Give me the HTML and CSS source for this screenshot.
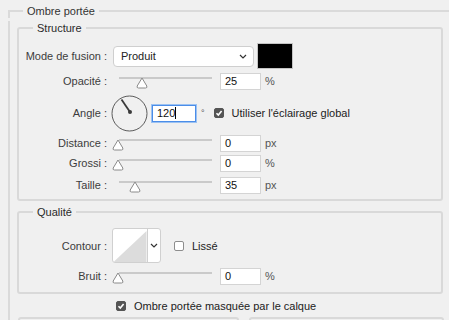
FILE: index.html
```html
<!DOCTYPE html>
<html lang="fr">
<head>
<meta charset="utf-8">
<title>Ombre portée</title>
<link rel="stylesheet" href="styles.css">
</head>
<body>
<div class="page">
  <div class="outer-head">
    <span class="seg seg-start"></span>
    <h2 class="outer-title">Ombre portée</h2>
    <span class="seg seg-end"></span>
  </div>
  <section class="outer">

    <fieldset class="box structure">
      <legend>Structure</legend>

      <div class="row row-mode">
        <span class="label">Mode de fusion :</span>
        <div class="select">
          <span>Produit</span>
          <svg class="chev" width="8" height="5" viewBox="0 0 8 5"><path d="M1 1 L4 4 L7 1" fill="none" stroke="#333" stroke-width="1.2"/></svg>
        </div>
        <div class="swatch"></div>
      </div>

      <div class="row">
        <span class="label">Opacité :</span>
        <div class="slider">
          <div class="track"></div>
          <svg class="thumb" style="left:24px" width="12" height="12" viewBox="0 0 12 12"><path d="M6 1 L10.8 9 Q11.5 11 9.5 11 H2.5 Q0.5 11 1.2 9 Z" fill="#fff" stroke="#8a8a8a"/></svg>
        </div>
        <div class="field">25</div><span class="unit">%</span>
      </div>

      <div class="row row-angle">
        <span class="label">Angle :</span>
        <svg class="dial" width="37" height="37" viewBox="0 0 37 37">
          <circle cx="18.5" cy="18.5" r="17.5" fill="none" stroke="#5a5a5a" stroke-width="1"/>
          <line x1="19" y1="17" x2="10.5" y2="4.5" stroke="#3a3a3a" stroke-width="1.8"/>
          <circle cx="19" cy="17" r="2" fill="#3a3a3a"/>
        </svg>
        <div class="field focus">120<span class="caret"></span></div>
        <span class="deg">°</span>
        <span class="check"><span class="cb on"><svg width="10" height="10" viewBox="0 0 10 10"><path d="M2.5 5.2 L4.3 7 L7.6 3" fill="none" stroke="#fff" stroke-width="1.6"/></svg></span>Utiliser l'éclairage global</span>
      </div>

      <div class="row row-tight">
        <span class="label">Distance :</span>
        <div class="slider">
          <div class="track"></div>
          <svg class="thumb" style="left:0px" width="12" height="12" viewBox="0 0 12 12"><path d="M6 1 L10.8 9 Q11.5 11 9.5 11 H2.5 Q0.5 11 1.2 9 Z" fill="#fff" stroke="#8a8a8a"/></svg>
        </div>
        <div class="field">0</div><span class="unit">px</span>
      </div>

      <div class="row row-tight">
        <span class="label">Grossi :</span>
        <div class="slider">
          <div class="track"></div>
          <svg class="thumb" style="left:0px" width="12" height="12" viewBox="0 0 12 12"><path d="M6 1 L10.8 9 Q11.5 11 9.5 11 H2.5 Q0.5 11 1.2 9 Z" fill="#fff" stroke="#8a8a8a"/></svg>
        </div>
        <div class="field">0</div><span class="unit">%</span>
      </div>

      <div class="row row-last">
        <span class="label">Taille :</span>
        <div class="slider">
          <div class="track"></div>
          <svg class="thumb" style="left:17px" width="12" height="12" viewBox="0 0 12 12"><path d="M6 1 L10.8 9 Q11.5 11 9.5 11 H2.5 Q0.5 11 1.2 9 Z" fill="#fff" stroke="#8a8a8a"/></svg>
        </div>
        <div class="field">35</div><span class="unit">px</span>
      </div>
    </fieldset>

    <fieldset class="box quality">
      <legend>Qualité</legend>

      <div class="row row-contour">
        <span class="label">Contour :</span>
        <div class="contour">
          <svg class="curve" width="35" height="35" viewBox="0 0 35 35"><path d="M0 35 L35 2 L35 35 Z" fill="#dcdcdc"/></svg>
          <div class="drop"><svg width="8" height="5" viewBox="0 0 8 5"><path d="M1 1 L4 4 L7 1" fill="none" stroke="#333" stroke-width="1.2"/></svg></div>
        </div>
        <span class="check lisse"><span class="cb"></span>Lissé</span>
      </div>

      <div class="row row-bruit">
        <span class="label">Bruit :</span>
        <div class="slider">
          <div class="track"></div>
          <svg class="thumb" style="left:0px" width="12" height="12" viewBox="0 0 12 12"><path d="M6 1 L10.8 9 Q11.5 11 9.5 11 H2.5 Q0.5 11 1.2 9 Z" fill="#fff" stroke="#8a8a8a"/></svg>
        </div>
        <div class="field">0</div><span class="unit">%</span>
      </div>
    </fieldset>

    <div class="mask-row">
      <span class="check"><span class="cb on"><svg width="10" height="10" viewBox="0 0 10 10"><path d="M2.5 5.2 L4.3 7 L7.6 3" fill="none" stroke="#fff" stroke-width="1.6"/></svg></span>Ombre portée masquée par le calque</span>
    </div>

    <div class="bottom">
      <div class="panel panel-left"></div>
      <div class="panel panel-right"></div>
    </div>
  </section>
</div>
</body>
</html>
```

FILE: styles.css
```css
html, body {
  margin: 0;
  padding: 0;
  background: #f0f0f0;
}
body {
  width: 449px;
  height: 320px;
  overflow: hidden;
  font-family: "Liberation Sans", Arial, sans-serif;
  font-size: 11px;
  color: #3c3c3c;
}
.page {
  padding: 4px 0 0 8px;
  height: 316px;
  overflow: hidden;
}
fieldset {
  margin: 0;
  min-width: 0;
}
legend {
  padding: 0 4px;
  line-height: 14px;
  color: #2a2a2a;
}
.outer-head {
  display: flex;
  height: 14px;
  width: 441px;
}
.seg {
  box-sizing: border-box;
  height: 8px;
  align-self: flex-end;
  border-top: 2px solid #dadada;
}
.seg-start {
  width: 15px;
  flex: none;
  border-left: 2px solid #dadada;
}
.seg-end {
  flex: 1;
}
.outer-title {
  margin: 0;
  padding: 0 4px;
  font-size: 11px;
  font-weight: normal;
  line-height: 14px;
  color: #333;
  white-space: nowrap;
}
.outer {
  box-sizing: border-box;
  width: 441px;
  border-left: 2px solid #dadada;
  padding: 0 0 0 7px;
}
.box {
  box-sizing: border-box;
  width: 426px;
  border: 2px solid #d9d9d9;
  border-radius: 3px;
  padding: 0;
}
.box > legend {
  margin-left: 14px;
}
.structure {
  margin-top: 3px;
  padding-bottom: 5px;
}
.quality {
  margin-top: 4px;
  padding-bottom: 7px;
}

.row {
  display: flex;
  align-items: center;
  height: 18px;
  margin-top: 3px;
}
.label {
  width: 88px;
  flex: none;
  text-align: right;
  white-space: pre;
}
.row-mode {
  height: 26px;
  margin-top: 8px;
}
.row-angle {
  height: 38px;
  margin-top: 4px;
}
.row-tight {
  margin-top: 2px;
}
.row-last {
  margin-top: 4px;
}

.select {
  box-sizing: border-box;
  margin-left: 6px;
  width: 141px;
  height: 21px;
  background: #fff;
  border: 1px solid #cfcfcf;
  border-radius: 4px;
  display: flex;
  align-items: center;
  justify-content: space-between;
  padding: 0 6px 0 7px;
  color: #222;
}
.chev {
  display: block;
}
.swatch {
  box-sizing: border-box;
  margin-left: 3px;
  width: 36px;
  height: 26px;
  background: #000;
  border: 1px solid #c4c4c4;
}

.slider {
  position: relative;
  margin-left: 5px;
  width: 106px;
  height: 18px;
  flex: none;
}
.track {
  position: absolute;
  left: 7px;
  right: 6px;
  top: 5px;
  height: 2px;
  background: #cacaca;
}
.thumb {
  position: absolute;
  top: 5px;
  display: block;
}
.field {
  box-sizing: border-box;
  margin-left: 2px;
  width: 41px;
  height: 17px;
  background: #fff;
  border: 1px solid #d4d4d4;
  padding: 0 4px;
  line-height: 15px;
  color: #111;
}
.unit {
  margin-left: 4px;
  color: #555;
}

.dial {
  display: block;
  margin-left: 4px;
  flex: none;
}
.field.focus {
  margin-left: 4px;
  width: 44px;
  border: 1px solid #4b8de8;
  box-shadow: 0 0 0 1px #9cc2f2;
  display: flex;
  align-items: center;
}
.caret {
  display: inline-block;
  width: 1px;
  height: 12px;
  background: #000;
}
.deg {
  margin-left: 5px;
  font-size: 9px;
  align-self: flex-start;
  margin-top: 14px;
  color: #555;
}
.check {
  display: flex;
  align-items: center;
  color: #222;
}
.row-angle .check {
  margin-left: 9px;
}
.cb {
  box-sizing: border-box;
  width: 10px;
  height: 10px;
  border-radius: 2px;
  border: 1px solid #8d8d8d;
  background: #fff;
  margin-right: 8px;
  flex: none;
}
.cb.on {
  background: #555;
  border-color: #555;
}
.cb svg {
  display: block;
  margin: -1px;
}

.row-contour {
  height: 35px;
  margin-top: 9px;
}
.contour {
  margin-left: 5px;
  display: flex;
  height: 35px;
  background: #fff;
  border: 1px solid #d0d0d0;
  border-radius: 3px;
  overflow: hidden;
  box-sizing: border-box;
}
.curve {
  display: block;
  width: 34px;
  height: 33px;
}
.drop {
  width: 12px;
  border-left: 1px solid #d0d0d0;
  display: flex;
  align-items: center;
  justify-content: center;
}
.lisse {
  margin-left: 13px;
}
.row-bruit {
  margin-top: 4px;
}

.mask-row {
  display: flex;
  align-items: center;
  height: 20px;
  margin-top: 2px;
  padding-left: 99px;
}
.bottom {
  display: flex;
  gap: 10px;
  margin-top: 1px;
  margin-left: 1px;
}
.panel {
  height: 30px;
  border: 2px solid #d9d9d9;
  border-radius: 3px;
  box-sizing: border-box;
}
.panel-left {
  width: 221px;
}
.panel-right {
  width: 195px;
}
```
